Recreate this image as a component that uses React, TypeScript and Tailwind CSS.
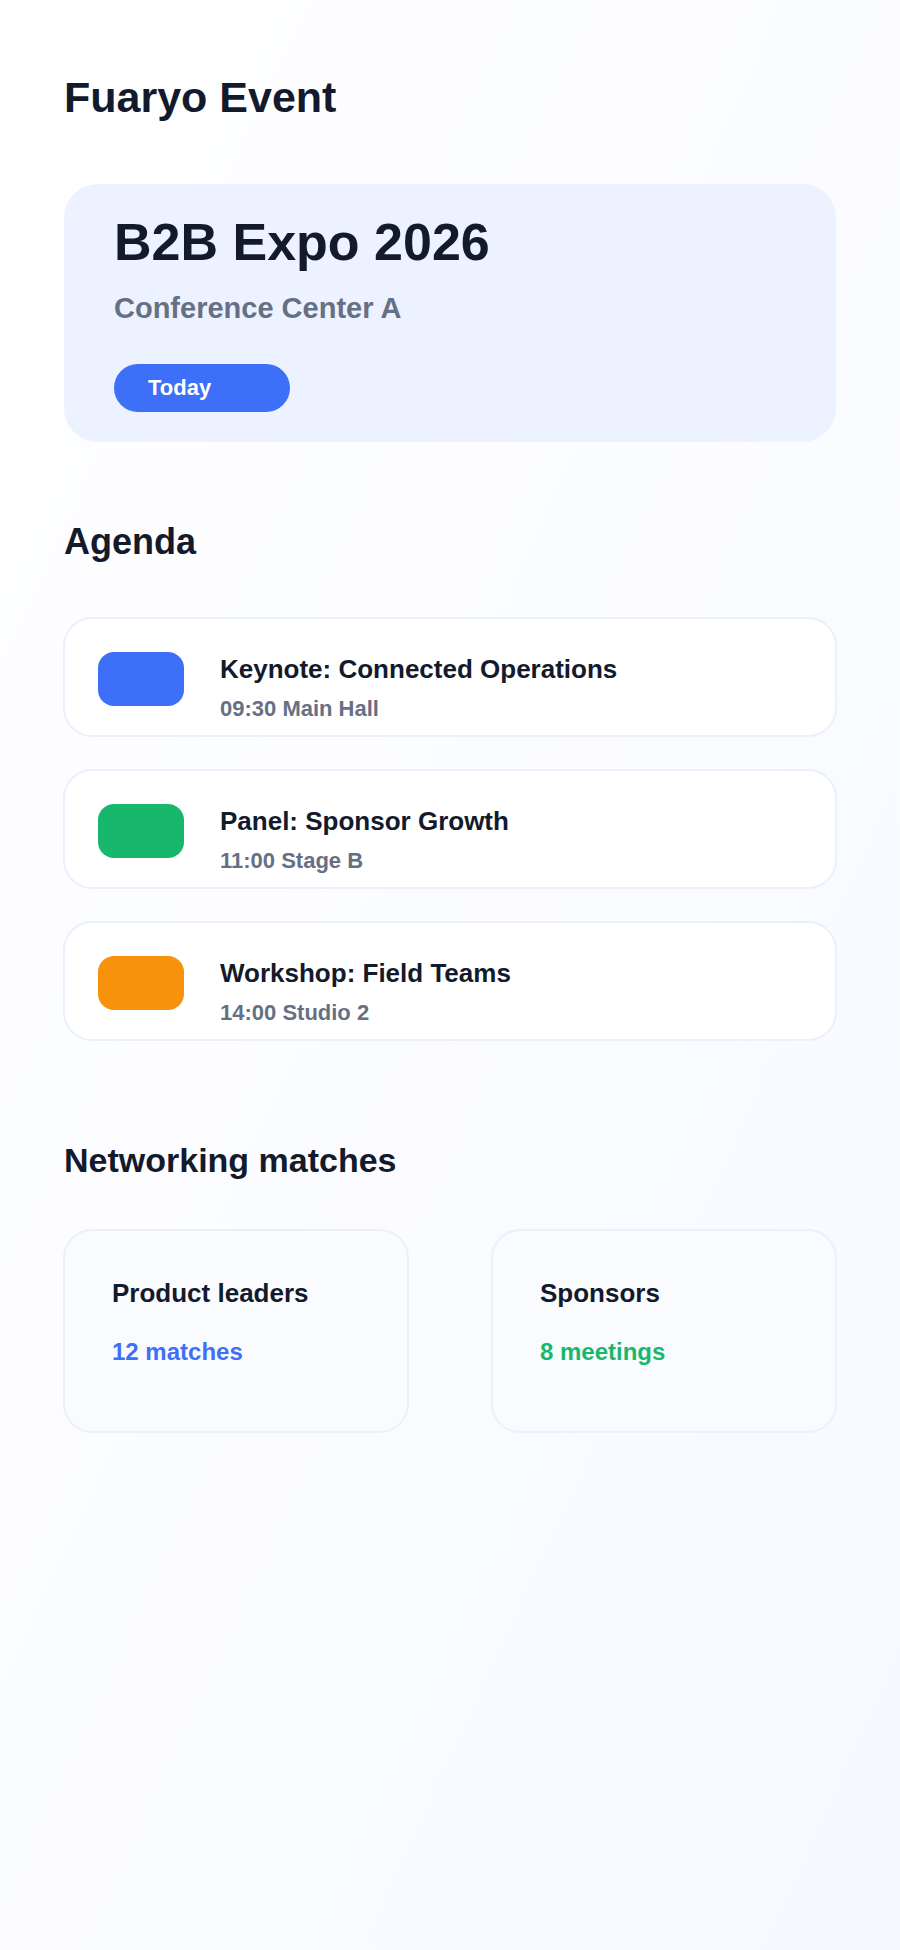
const sessions = [
  { title: "Keynote: Connected Operations", detail: "09:30 Main Hall", color: "bg-[#3d6ff8]" },
  { title: "Panel: Sponsor Growth", detail: "11:00 Stage B", color: "bg-[#17b86c]" },
  { title: "Workshop: Field Teams", detail: "14:00 Studio 2", color: "bg-[#f8920d]" },
];

const matches = [
  { title: "Product leaders", count: "12 matches", color: "text-[#3d6ff8]" },
  { title: "Sponsors", count: "8 meetings", color: "text-[#17b86c]" },
];

export default function App() {
  return (
    <main className="min-h-screen bg-linear-to-br from-white via-[#fafbff] via-65% to-[#f5f9ff] px-16 pt-18 pb-16 font-['Liberation_Sans',Arial,sans-serif] font-bold text-[#121a2b]">
      <h1 className="text-[43px] leading-[50px]">Fuaryo Event</h1>

      <section className="mt-[62px] rounded-[34px] bg-[#ecf2ff] px-[50px] pt-[26px] pb-[30px]">
        <h2 className="text-[52px] leading-[64px]">B2B Expo 2026</h2>
        <p className="mt-[18px] text-[29px] leading-[32px] text-[#667085]">Conference Center A</p>
        <button
          type="button"
          className="mt-10 flex h-12 w-44 items-center rounded-full bg-[#3d6ff8] px-[34px] text-[22px] leading-[28px] text-white"
        >
          Today
        </button>
      </section>

      <section className="mt-20">
        <h2 className="text-[36px] leading-[40px]">Agenda</h2>
        <ul className="-mx-px mt-[55px] flex flex-col gap-8">
          {sessions.map((session) => (
            <li
              key={session.title}
              className="flex items-start gap-9 rounded-[29px] border-2 border-[#ebf0fb] bg-white px-[33px] pt-[33px] pb-3"
            >
              <span className={`h-[54px] w-[86px] shrink-0 rounded-2xl ${session.color}`} />
              <div>
                <h3 className="text-[26px] leading-[34px]">{session.title}</h3>
                <p className="mt-[9px] text-[22px] leading-[28px] text-[#667085]">{session.detail}</p>
              </div>
            </li>
          ))}
        </ul>
      </section>

      <section className="mt-[99px]">
        <h2 className="text-[34px] leading-[40px]">Networking matches</h2>
        <ul className="-mx-px mt-[49px] grid grid-cols-2 gap-[82px]">
          {matches.map((match) => (
            <li
              key={match.title}
              className="rounded-[29px] border-2 border-[#ebf0fb] bg-[#fafbff] px-[47px] pt-[45px] pb-[63px]"
            >
              <h3 className="text-[26px] leading-[34px]">{match.title}</h3>
              <p className={`mt-[26px] text-[24px] leading-[32px] ${match.color}`}>{match.count}</p>
            </li>
          ))}
        </ul>
      </section>
    </main>
  );
}
